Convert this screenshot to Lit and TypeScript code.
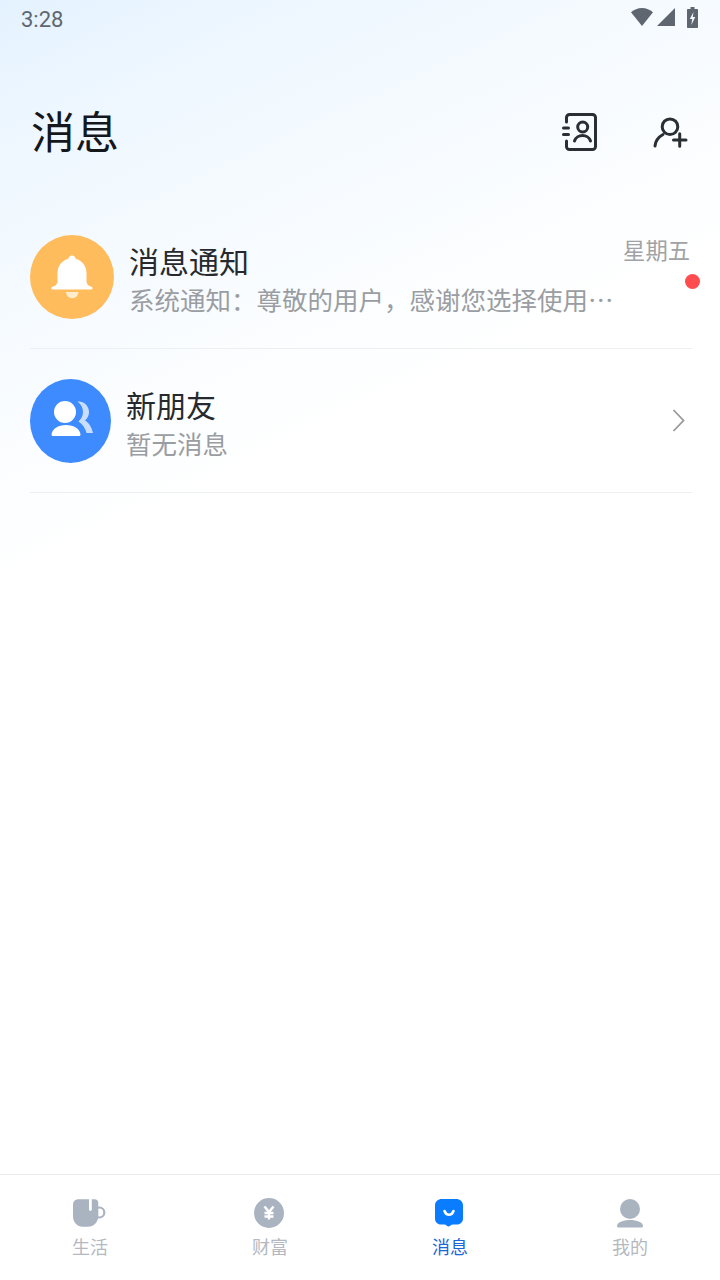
import { LitElement, html, css } from "lit";
import { customElement } from "lit/decorators.js";

const bell = html`<svg width="84" height="84" viewBox="0 0 84 84">
  <circle cx="42" cy="42" r="42" fill="#ffbc5c"/>
  <path d="M36 57h12.500a6.250 6.250 0 0 1-12.500 0z" fill="#ffeccd"/>
  <path d="M42 20.500c2 0 3.500 1.500 3.600 3.300C52 25.500 56.500 31 56.500 38v8c0 2.500 1.200 4 3 5l1.300.4c1.200.3 1.800 1 1.800 1.700 0 1-.8 1.500-2 1.500H23.400c-1.200 0-2-.5-2-1.500 0-.7.6-1.400 1.800-1.700l1.300-.4c1.800-1 3-2.500 3-5v-8c0-7 4.500-12.500 10.900-14.200.1-1.800 1.600-3.300 3.600-3.300z" fill="#fff"/>
</svg>`;

const friends = html`<svg width="81" height="84" viewBox="0 0 81 84">
  <ellipse cx="40.500" cy="42" rx="40.500" ry="42" fill="#3e8aff"/>
  <path d="M47.500 22.500c6.500-.5 11.500 4.500 11.500 10.500 0 3.500-1.500 6.500-4 8.500 3.500 2 6.500 6 8 12.500h-6.500c-1-4.500-4-9-8-11.500 3-3 4.500-6 4.500-9.500 0-4-2-8-5.500-10.500z" fill="#c9defc"/>
  <circle cx="35" cy="33" r="11" fill="#fff"/>
  <path d="M21.500 55.500C22 50 28 46 36 46s14 4 14.500 9.500c0 .8-.5 1.500-1.500 1.500H23c-1 0-1.500-.7-1.500-1.500z" fill="#fff"/>
</svg>`;

const contacts = html`<svg width="36" height="38" viewBox="0 0 36 38" fill="none" stroke="#2a2f33" stroke-width="3" stroke-linecap="round">
  <path d="M4.500 9V4.500c0-1.700 1.300-3 3-3h23c1.700 0 3 1.300 3 3v29c0 1.700-1.300 3-3 3h-23c-1.700 0-3-1.300-3-3V28"/>
  <path d="M1.500 15h5M1.500 21.500h5"/>
  <circle cx="20.700" cy="14" r="5"/>
  <path d="M12.500 28c1-3.500 4.500-5.500 8-5.500s7 2 8 5.500"/>
</svg>`;

const addUser = html`<svg width="35" height="31" viewBox="0 0 35 31" fill="none" stroke="#2a2f33" stroke-width="3" stroke-linecap="round">
  <circle cx="17" cy="9.700" r="7.800"/>
  <path d="M2 29c.5-5 3.500-9 8-11.500"/>
  <path d="M20.500 23h12.500M26.700 16.700v12.600"/>
</svg>`;

const tabLife = html`<svg width="34" height="30" viewBox="0 0 34 30">
  <circle cx="26.300" cy="14.500" r="5" fill="none" stroke="#aab3c0" stroke-width="2.200"/>
  <path d="M5.500 1.300H16V11.500a1.300 1.300 0 0 0 2.800 0V1.300h2.700c2.400 0 3.800 1.400 3.800 3.800V18c0 6-4.500 10.800-10.500 10.800H10C4.300 28.800 0 24.300 0 18.500V6.800C0 3.500 2.300 1.300 5.500 1.300z" fill="#aab3c0"/>
</svg>`;

const tabMoney = html`<svg width="30" height="30" viewBox="0 0 30 30">
  <circle cx="15" cy="15" r="15" fill="#aab3c0"/>
  <path d="M10.500 8.500l4.500 5.500 4.500-5.500M10.500 15h9M10.500 18.500h9M15 14v7.500" fill="none" stroke="#fff" stroke-width="2.400"/>
</svg>`;

const tabMsg = html`<svg width="28" height="30" viewBox="0 0 28 30">
  <path d="M7 1h14c4 0 7 2.500 7 6.500v13c0 3.500-2.500 6-6 6h-4c-1 0-2 .5-2.800 1.300-1 1-2.400 1-3.400 0C11 27 10 26.500 9 26.500H6c-3.500 0-6-2.500-6-6v-13C0 3.500 3 1 7 1z" fill="#0a7cff"/>
  <path d="M9.500 13c1 2.600 2.500 3.800 4.500 3.800s3.500-1.200 4.500-3.800" fill="none" stroke="#fff" stroke-width="2.600" stroke-linecap="round"/>
</svg>`;

const tabMe = html`<svg width="28" height="30" viewBox="0 0 28 30">
  <circle cx="14" cy="11" r="10" fill="#aab3c0"/>
  <path d="M1 28c0-3.500 6-6 13-6s13 2.500 13 6c0 .8-.6 1.500-1.500 1.500h-23C1.600 29.500 1 28.800 1 28z" fill="#aab3c0"/>
</svg>`;

@customElement("app-root")
export class AppRoot extends LitElement {
  static styles = css`
    :host {
      display: block;
      width: 720px;
      height: 1280px;
      font-family: "Noto Sans CJK SC", "Noto Sans", sans-serif;
    }
    .page {
      width: 720px;
      height: 1280px;
      display: flex;
      flex-direction: column;
      background: linear-gradient(155deg, #e4f2ff 0%, #eef7ff 15%, #f4faff 30%, #fbfdff 48%, #ffffff 62%) no-repeat;
      background-size: 100% 620px;
      overflow: hidden;
    }
    .status {
      height: 38px;
      flex: none;
      display: flex;
      align-items: center;
      justify-content: space-between;
      padding: 0 22px 0 21px;
    }
    .time {
      font-family: Roboto, sans-serif;
      font-size: 22px;
      color: #5f6670;
    }
    .sys {
      display: flex;
      align-items: center;
      gap: 4px;
      margin-bottom: 4px;
    }
    .sys svg { display: block; }
    .sys .batt { margin-left: 8px; }
    .head {
      height: 120px;
      flex: none;
      box-sizing: border-box;
      padding: 64px 32px 0 31px;
      display: flex;
      align-items: center;
      justify-content: space-between;
    }
    .title {
      font-size: 44px;
      line-height: 56px;
      color: #14181c;
    }
    .acts {
      display: flex;
      align-items: center;
      gap: 55px;
      padding-top: 4px;
    }
    .acts svg { display: block; }
    .list {
      flex: none;
      padding: 77px 0 0;
    }
    .row {
      height: 84px;
      margin: 0 28px 0 30px;
      padding-bottom: 29px;
      display: flex;
      gap: 15px;
      border-bottom: 1px solid #edf0f3;
      position: relative;
    }
    .row + .row { margin-top: 30px; }
    .avatar { flex: none; height: 84px; }
    .avatar svg { display: block; }
    .body {
      flex: 1;
      min-width: 0;
      display: flex;
      flex-direction: column;
    }
    .name {
      font-size: 30px;
      line-height: 42px;
      height: 42px;
      margin-top: 4px;
      color: #262a2e;
    }
    .sub {
      font-size: 25.5px;
      line-height: 36px;
      color: #9a9da1;
      white-space: nowrap;
    }
    .side {
      flex: none;
      display: flex;
      flex-direction: column;
      align-items: flex-end;
    }
    .day {
      font-size: 22.3px;
      line-height: 32px;
      margin-top: -2px;
      color: #a0a2a5;
      padding-right: 2px;
    }
    .dot {
      width: 15px;
      height: 15px;
      border-radius: 50%;
      background: #ff4d4f;
      position: absolute;
      right: -8px;
      top: 39px;
    }
    .chev {
      align-self: center;
      flex: none;
      margin-right: 7px;
      margin-top: -1px;
      display: block;
    }
    .spacer { flex: 1; }
    .tabs {
      flex: none;
      height: 106px;
      box-sizing: border-box;
      border-top: 1px solid #e9ebee;
      background: #fff;
      display: grid;
      grid-template-columns: repeat(4, 1fr);
    }
    .tab {
      display: flex;
      flex-direction: column;
      align-items: center;
      padding-top: 23px;
    }
    .ic {
      height: 30px;
      display: flex;
      align-items: center;
      justify-content: center;
    }
    .ic svg { display: block; }
    .ic.shift { margin-right: 2px; }
    .lab {
      font-size: 18px;
      line-height: 26px;
      margin-top: 5px;
      color: #b4b9c1;
    }
    .tab.on .lab { color: #1a66d6; }
  `;

  render() {
    return html`<div class="page">
      <div class="status">
        <span class="time">3:28</span>
        <div class="sys">
          <svg width="22" height="18" viewBox="0 0 22 18"><path d="M0 4.300C3 1.700 6.800 0 11 0s8 1.700 11 4.300L11 18z" fill="#5f6670"/></svg>
          <svg width="18" height="18" viewBox="0 0 18 18"><path d="M18 0v18H0z" fill="#5f6670"/></svg>
          <svg class="batt" width="11" height="21" viewBox="0 0 11 21"><path d="M3.500 0h4v2H10c.6 0 1 .4 1 1v17c0 .6-.4 1-1 1H1c-.6 0-1-.4-1-1V3c0-.6.4-1 1-1h2.500z" fill="#5f6670"/><path d="M6.500 5L2.800 12h2.400L4.300 18 8.300 10H5.800z" fill="#f4f9fd"/></svg>
        </div>
      </div>
      <div class="head">
        <div class="title">消息</div>
        <div class="acts">${contacts}${addUser}</div>
      </div>
      <div class="list">
        <div class="row">
          <div class="avatar">${bell}</div>
          <div class="body">
            <div class="name">消息通知</div>
            <div class="sub">系统通知：尊敬的用户，感谢您选择使用…</div>
          </div>
          <div class="side"><span class="day">星期五</span></div>
          <span class="dot"></span>
        </div>
        <div class="row">
          <div class="avatar">${friends}</div>
          <div class="body">
            <div class="name">新朋友</div>
            <div class="sub">暂无消息</div>
          </div>
          <svg class="chev" width="13" height="23" viewBox="0 0 13 23" fill="none" stroke="#98999c" stroke-width="1.800"><path d="M1.500 1L11.500 11.500 1.500 22"/></svg>
        </div>
      </div>
      <div class="spacer"></div>
      <div class="tabs">
        <div class="tab"><div class="ic">${tabLife}</div><div class="lab">生活</div></div>
        <div class="tab"><div class="ic shift">${tabMoney}</div><div class="lab">财富</div></div>
        <div class="tab on"><div class="ic shift">${tabMsg}</div><div class="lab">消息</div></div>
        <div class="tab"><div class="ic">${tabMe}</div><div class="lab">我的</div></div>
      </div>
    </div>`;
  }
}
